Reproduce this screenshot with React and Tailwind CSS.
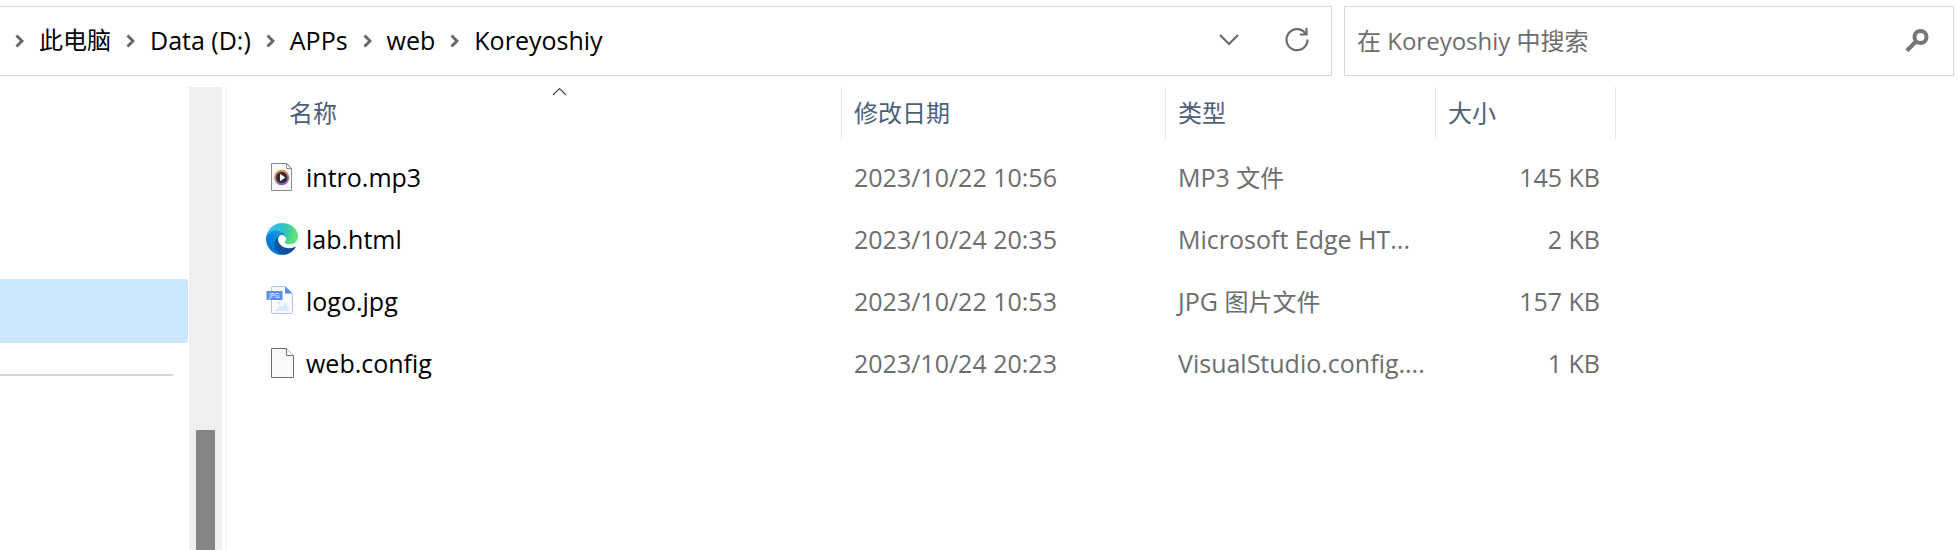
import React from "react";

const crumbs = [
  { name: "此电脑", size: "text-[24px]" },
  { name: "Data (D:)", size: "text-[25px]" },
  { name: "APPs", size: "text-[25px]" },
  { name: "web", size: "text-[25px]" },
  { name: "Koreyoshiy", size: "text-[25px]" },
];

const files = [
  { name: "intro.mp3", date: "2023/10/22 10:56", type: "MP3 ", cjk: "文件", size: "145 KB", Icon: AudioIcon },
  { name: "lab.html", date: "2023/10/24 20:35", type: "Microsoft Edge HT...", size: "2 KB", Icon: EdgeIcon },
  { name: "logo.jpg", date: "2023/10/22 10:53", type: "JPG ", cjk: "图片文件", size: "157 KB", Icon: JpgIcon },
  { name: "web.config", date: "2023/10/24 20:23", type: "VisualStudio.config....", size: "1 KB", Icon: PageIcon },
];

const columns = [
  { label: "名称", width: "w-[615px]", pad: "pl-[62px]", sorted: true },
  { label: "修改日期", width: "w-[324px]", pad: "pl-3" },
  { label: "类型", width: "w-[270px]", pad: "pl-3" },
  { label: "大小", width: "w-[180px]", pad: "pl-3" },
];

function AudioIcon() {
  return (
    <svg width="32" height="32" viewBox="0 0 32 32" aria-hidden="true">
      <defs>
        <linearGradient id="ring" x1="0" y1="0" x2="0.3" y2="1">
          <stop offset="0" stopColor="#f58a3c" />
          <stop offset="0.5" stopColor="#e08a78" />
          <stop offset="1" stopColor="#8a5cc8" />
        </linearGradient>
      </defs>
      <path d="M5.500 2.500H21L25.500 7.500V29.500H5.500Z" fill="#f8f8f8" stroke="#8c8c8c" />
      <path d="M20.500 2.500V7.500H25.500Z" fill="#fff" stroke="#8c8c8c" />
      <circle cx="15.700" cy="16.500" r="6.700" fill="#2f2f35" stroke="url(#ring)" strokeWidth="1.900" />
      <path d="M14 12.800L19.300 16.500L14 20.200Z" fill="#fff" />
    </svg>
  );
}

function EdgeIcon() {
  return (
    <svg width="32" height="32" viewBox="0 0 256 256" aria-hidden="true">
      <defs>
        <linearGradient id="edgeA" gradientUnits="userSpaceOnUse" x1="63" y1="178" x2="241" y2="178">
          <stop offset="0" stopColor="#0c59a4" />
          <stop offset="1" stopColor="#114a8b" />
        </linearGradient>
        <linearGradient id="edgeB" gradientUnits="userSpaceOnUse" x1="157" y1="100" x2="46" y2="221">
          <stop offset="0" stopColor="#1b9de2" />
          <stop offset="0.16" stopColor="#1595df" />
          <stop offset="0.67" stopColor="#0680d7" />
          <stop offset="1" stopColor="#0078d4" />
        </linearGradient>
        <radialGradient id="edgeC" gradientUnits="userSpaceOnUse" cx="26" cy="44" r="240">
          <stop offset="0" stopColor="#35c1f1" />
          <stop offset="0.3" stopColor="#2fc0e2" />
          <stop offset="0.6" stopColor="#36c9a8" />
          <stop offset="1" stopColor="#66eb6e" />
        </radialGradient>
      </defs>
      <path d="M231 190.500c-3.400 1.800-6.900 3.400-10.500 4.700a101.700 101.700 0 0 1-35.900 6.500c-47.300 0-88.500-32.500-88.500-74.300a31.500 31.500 0 0 1 16.400-27.300c-42.800 1.800-53.800 46.400-53.800 72.500 0 73.900 68.100 81.400 82.800 81.400 7.900 0 19.800-2.300 27-4.600l1.300-.4a128.300 128.300 0 0 0 66.600-52.800 4 4 0 0 0-5.400-5.700Z" fill="url(#edgeA)" />
      <path d="M105.700 241.400a79.200 79.200 0 0 1-22.700-21.300 80.700 80.700 0 0 1 29.500-120c3.200-1.500 8.500-4.100 15.600-4a32.400 32.400 0 0 1 25.700 13 31.900 31.900 0 0 1 6.300 18.700c0-.2 24.500-79.600-80-79.600-43.900 0-80 41.700-80 78.200a130.200 130.200 0 0 0 12.100 56 128 128 0 0 0 156.400 67 75.500 75.500 0 0 1-62.800-8Z" fill="url(#edgeB)" />
      <path d="M152.300 148.900c-.8 1-3.300 2.500-3.300 5.700 0 2.600 1.700 5.100 4.700 7.300 14.500 10 41.700 8.700 41.800 8.700a60 60 0 0 0 30.500-8.500 61.800 61.800 0 0 0 30.500-53.300c.2-22.400-8-37.300-11.300-43.900C224.100 23.900 178.800 0 129.300 0A128 128 0 0 0 1.300 126.200c.5-36.500 36.800-66 80.100-66 3.500 0 23.500.3 42 10 16.300 8.600 24.900 19 30.800 29.200 6.200 10.600 7.300 24.100 7.300 29.500 0 5.300-2.700 13.300-9.200 20Z" fill="url(#edgeC)" />
    </svg>
  );
}

function JpgIcon() {
  return (
    <svg width="32" height="32" viewBox="0 0 32 32" aria-hidden="true">
      <path d="M7 1.500H19.500L26.500 8.500V27Q26.500 28.500 25 28.500H7Q5.500 28.500 5.500 27V3Q5.500 1.500 7 1.500Z" fill="#f9fbff" stroke="#a9c6f5" />
      <path d="M19 1.500L26.500 8.500H19Z" fill="#5b8fe6" />
      <circle cx="13" cy="18" r="1.700" fill="#dce9fd" />
      <path d="M9 26L14 20L16 21.500L18.500 17.800Q19.500 17 20.500 18.300L23 23.500V26Z" fill="#dce9fd" />
      <rect x="0.500" y="6" width="16" height="9" rx="0.500" fill="#5b8fe6" />
      <text x="3" y="13" fontSize="6.500" fontFamily="Open Sans" fill="#fff">JPG</text>
    </svg>
  );
}

function PageIcon() {
  return (
    <svg width="32" height="32" viewBox="0 0 32 32" aria-hidden="true">
      <path d="M5.500 1.500H20.500L27.500 8.500V30.500H5.500Z" fill="#f9f9f9" stroke="#6e6e6e" />
      <path d="M20.500 1.500V8.500H27.500" fill="#fff" stroke="#6e6e6e" />
    </svg>
  );
}

function CrumbChevron() {
  return (
    <svg className="shrink-0" width="9" height="14" viewBox="0 0 9 14" aria-hidden="true">
      <path d="M1.500 1.500L7 7L1.500 12.500" fill="none" stroke="#666" strokeWidth="2.900" />
    </svg>
  );
}

export default function App() {
  return (
    <div className="flex h-screen flex-col overflow-hidden bg-white pt-1.5 font-['Open_Sans','Noto_Sans_CJK_SC',sans-serif] text-[25px] leading-8 text-black">
      <header className="flex h-[70px] shrink-0 gap-3 pr-[3px]">
        <div className="flex min-w-0 flex-1 items-center border border-l-0 border-[#d9d9d9] pr-[22px] pl-[15px]">
          <nav aria-label="路径" className="flex min-w-0 flex-1 items-center">
            {crumbs.map((c) => (
              <React.Fragment key={c.name}>
                <CrumbChevron />
                <button type="button" className={`px-[15px] pb-0.5 whitespace-nowrap ${c.size}`}>
                  {c.name}
                </button>
              </React.Fragment>
            ))}
          </nav>
          <button type="button" aria-label="以前的位置" className="mr-[46px]">
            <svg width="20" height="14" viewBox="0 0 20 14" aria-hidden="true">
              <path d="M1 1L10 10L19 1" fill="none" stroke="#6b6b6b" strokeWidth="2.200" />
            </svg>
          </button>
          <button type="button" aria-label="刷新">
            <svg width="24" height="28" viewBox="0 0 24 28" aria-hidden="true">
              <path d="M20.500 6.500A10.500 10.500 0 1 0 22.500 12.500" fill="none" stroke="#6b6b6b" strokeWidth="2.200" />
              <path d="M21.500 1V7.500H15" fill="none" stroke="#6b6b6b" strokeWidth="2.200" />
            </svg>
          </button>
        </div>
        <form className="flex w-[610px] items-center border border-[#d9d9d9] pr-6 pl-3">
          <input
            type="text"
            aria-label="搜索"
            placeholder="在 Koreyoshiy 中搜索"
            className="min-w-0 flex-1 text-[24px] outline-none placeholder:text-[#6d6d6d] placeholder:opacity-100"
          />
          <button type="button" aria-label="开始搜索">
            <svg width="24" height="24" viewBox="0 0 24 24" aria-hidden="true">
              <circle cx="15.500" cy="8" r="6" fill="none" stroke="#767676" strokeWidth="4" />
              <path d="M11 12.500L1.800 21.700" fill="none" stroke="#767676" strokeWidth="4.200" />
            </svg>
          </button>
        </form>
      </header>

      <div className="mt-[11px] flex min-h-0 flex-1">
        <aside className="flex w-[222px] shrink-0">
          <div className="flex-1 pt-48">
            <div className="mr-px h-16 rounded-r-xs bg-[#cce8ff]" />
            <hr className="mt-[31px] mr-4 h-0.5 border-0 bg-[#d6d6d6]" />
          </div>
          <div className="w-[33px] bg-[#efefef] px-[7px] pt-[343px]">
            <div className="h-full bg-[#858585]" />
          </div>
        </aside>
        <main className="ml-[3px] min-w-0 flex-1 border-l-2 border-[#f8f8f8]">
          <table className="w-[1389px] table-fixed border-collapse text-left">
            <thead>
              <tr className="h-[59px]">
                {columns.map((c) => (
                  <th key={c.label} scope="col" className={`${c.width} p-0 align-top font-normal`}>
                    <div className={`relative flex h-[52px] items-center border-r border-[#e5e5e5] ${c.pad}`}>
                      <button type="button" className="text-[24px] text-[#4c607a]">
                        {c.label}
                      </button>
                      {c.sorted && (
                        <svg className="absolute top-0 right-[274px]" width="15" height="9" viewBox="0 0 15 9" aria-hidden="true">
                          <path d="M1 8L7.500 1.500L14 8" fill="none" stroke="#444" strokeWidth="1.200" />
                        </svg>
                      )}
                    </div>
                  </th>
                ))}
              </tr>
            </thead>
            <tbody>
              {files.map(({ name, date, type, cjk, size, Icon }) => (
                <tr key={name} className="h-[62px]">
                  <td className="p-0 pl-[39px]">
                    <a href={`#${name}`} className="flex items-center gap-2">
                      <Icon />
                      {name}
                    </a>
                  </td>
                  <td className="p-0 pl-3 text-[#6d6d6d]">{date}</td>
                  <td className="p-0 pl-3 whitespace-nowrap text-[#6d6d6d]">
                    {type}
                    {cjk && <span className="text-[24px]">{cjk}</span>}
                  </td>
                  <td className="p-0 pr-4 text-right text-[#6d6d6d]">{size}</td>
                </tr>
              ))}
            </tbody>
          </table>
        </main>
      </div>
    </div>
  );
}
